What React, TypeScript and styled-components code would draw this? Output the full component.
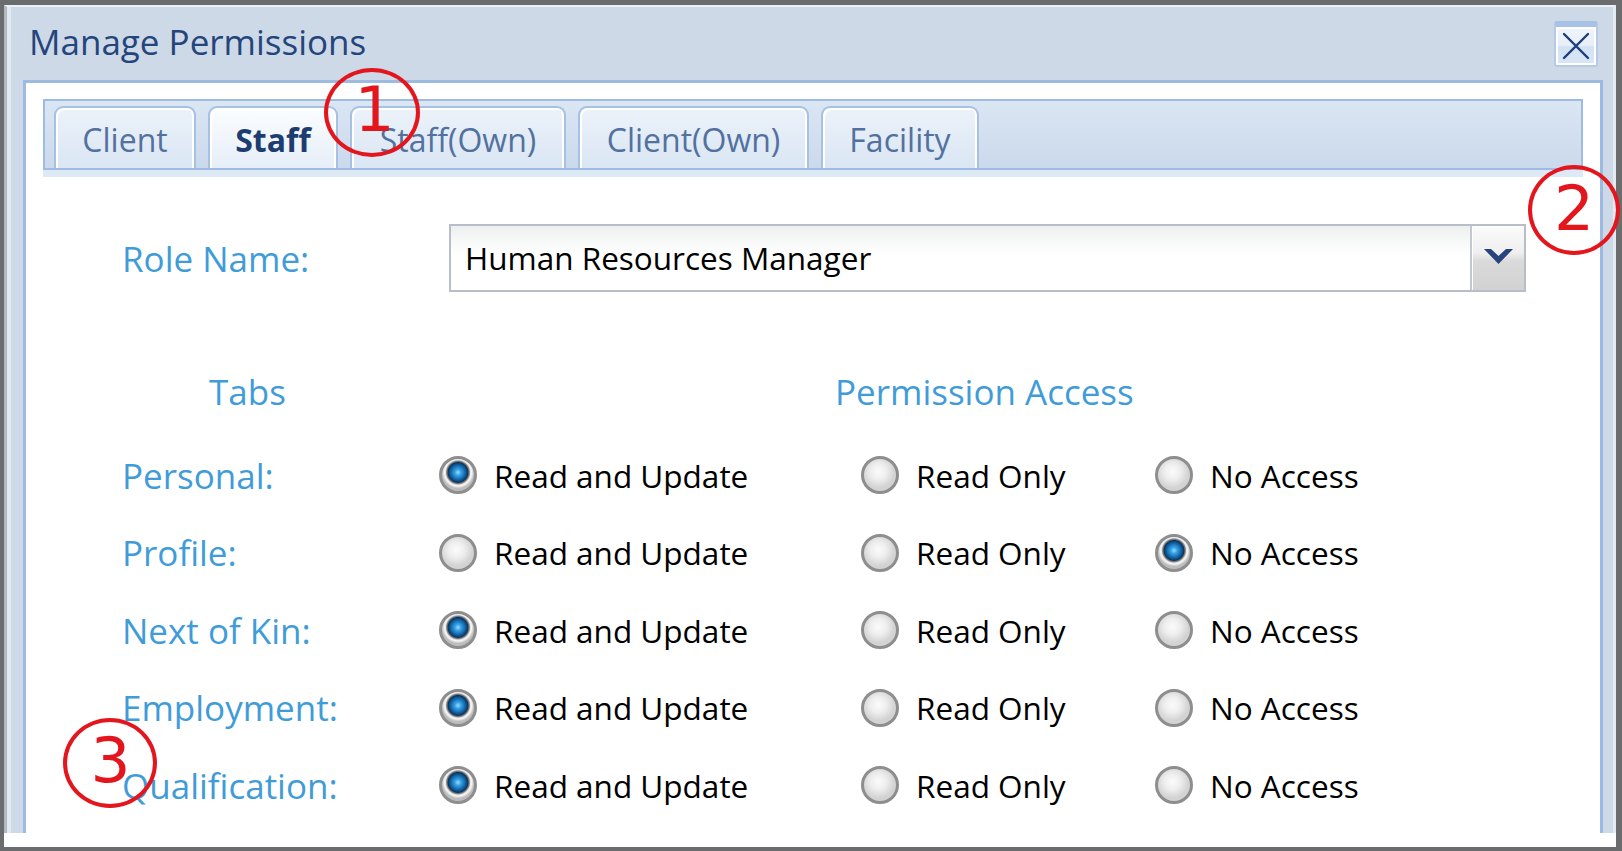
import React from "react";
import styled, { createGlobalStyle } from "styled-components";

const GlobalStyle = createGlobalStyle`
  html, body {
    margin: 0;
    padding: 0;
    background: #6b6c6e;
  }
  body {
    font-family: "Open Sans", "Noto Sans", sans-serif;
  }
`;

const Page = styled.div`
  position: relative;
  width: 1622px;
  height: 851px;
  overflow: hidden;
`;

const Frame = styled.div`
  width: 100%;
  height: 100%;
  box-sizing: border-box;
  border-style: solid;
  border-color: #6b6c6e;
  border-width: 5px 6px 4px 4px;
  background: #fff;
`;

const Dialog = styled.div`
  height: 828px;
  box-sizing: border-box;
  display: flex;
  flex-direction: column;
  background: #cdd9e6;
  border-top: 2px solid #edf1f6;
  border-left: 3px solid #b3b9c0;
  border-right: 3px solid #e4eaf2;
  box-shadow: inset 4px 0 0 #e3e9f1;
  padding: 0 10px 0 16px;
`;

const TitleBar = styled.div`
  height: 73px;
  flex-shrink: 0;
  display: flex;
  align-items: center;
  justify-content: space-between;
  padding-left: 6px;
  padding-right: 5px;
`;

const Title = styled.span`
  font-size: 35px;
  line-height: 1;
  color: #24457c;
  margin-top: -5px;
`;

const CloseButton = styled.div`
  width: 44px;
  height: 46px;
  margin-top: 1px;
  box-sizing: border-box;
  border: 2px solid #b6cae6;
  border-top: 6px solid #a6c2e6;
  border-radius: 3px;
  background: linear-gradient(#f0f5fb 0%, #e6eef8 48%, #d3e2f3 52%, #d9e6f5 100%);
  box-shadow: inset 0 0 0 2px #fff;
  display: flex;
  align-items: center;
  justify-content: center;
`;

const Panel = styled.div`
  flex: 1;
  display: flex;
  flex-direction: column;
  background: #fff;
  border: 3px solid #9dbbe1;
  border-bottom: none;
`;

const TabStrip = styled.div`
  margin: 16px 17px 7px;
  height: 71px;
  box-sizing: border-box;
  border: 2px solid #9ebce2;
  background: linear-gradient(#dbe6f3, #cad9ec);
  box-shadow: 0 7px 0 #dee9f6;
  display: flex;
  align-items: flex-end;
  gap: 12px;
  padding-left: 9px;
`;

const Tab = styled.div<{ $width: number; $active?: boolean }>`
  width: ${(p) => p.$width}px;
  height: 62px;
  box-sizing: border-box;
  border: 2px solid #a7c1e3;
  border-bottom: none;
  border-radius: 9px 9px 0 0;
  box-shadow: inset 2px 2px 0 #fff, inset -2px 0 0 #fff;
  background: ${(p) =>
    p.$active
      ? "linear-gradient(#fbfdff, #e6eef8)"
      : "linear-gradient(#ecf2f9, #dae6f4)"};
  display: flex;
  align-items: center;
  justify-content: center;
  padding-top: 4px;
  font-size: 32px;
  line-height: 1;
  font-weight: ${(p) => (p.$active ? 700 : 400)};
  color: ${(p) => (p.$active ? "#1d3d70" : "#52719f")};
`;

const Form = styled.div`
  padding-left: 96px;
  display: flex;
  flex-direction: column;
`;

const RoleRow = styled.div`
  margin-top: 47px;
  height: 68px;
  display: flex;
  align-items: center;
`;

const Label = styled.span<{ $width?: number }>`
  width: ${(p) => (p.$width ? `${p.$width}px` : "auto")};
  flex-shrink: 0;
  font-size: 35px;
  line-height: 1;
  color: #3f9cd9;
  white-space: nowrap;
`;

const Combo = styled.div`
  width: 1077px;
  height: 68px;
  box-sizing: border-box;
  border: 2px solid #b8bdca;
  display: flex;
`;

const ComboText = styled.div`
  flex: 1;
  display: flex;
  align-items: center;
  padding-left: 14px;
  font-size: 31.5px;
  line-height: 1;
  color: #000;
  background: linear-gradient(#eef0f0 0%, #ffffff 45%);
`;

const ComboButton = styled.div`
  width: 52px;
  border-left: 2px solid #c3c7cf;
  box-shadow: inset 1px 1px 0 #fff;
  background: linear-gradient(#fbfbfb 0%, #efefef 42%, #dadada 55%, #d2d2d2 100%);
  display: flex;
  align-items: center;
  justify-content: center;
  padding-bottom: 3px;
`;

const HeaderRow = styled.div`
  margin-top: 73px;
  height: 52px;
  display: flex;
  align-items: center;
  padding-left: 87px;
`;

const Rows = styled.div`
  margin-top: 19.5px;
  display: flex;
  flex-direction: column;
`;

const PermRow = styled.div`
  height: 77.5px;
  display: grid;
  grid-template-columns: 317px 422px 294px auto;
  align-items: center;
`;

const Option = styled.label`
  display: flex;
  align-items: center;
  gap: 17px;
  font-size: 31.5px;
  line-height: 1;
  color: #000;
  white-space: nowrap;
`;

const RadioDot = styled.span<{ $checked?: boolean }>`
  width: 38px;
  height: 38px;
  flex-shrink: 0;
  box-sizing: border-box;
  border-radius: 50%;
  border: 3px solid #8e8e8e;
  background: ${(p) =>
    p.$checked
      ? "radial-gradient(circle at 50% 42%, #9adcfb 0, #3ba3e4 3px, #1a78c0 6px, #0e4f86 8.5px, #0a3558 10px, #4e5a66 10.5px, #8f8f8f 11.5px, #e6e6e6 12.5px, #f7f7f7 13.5px, #d4d4d4 15px, #bdbdbd 16px)"
      : "radial-gradient(circle at 45% 40%, #fbfbfb 0, #eeeeee 8px, #d3d3d3 16px)"};
`;

const Mark = styled.div<{ $x: number; $y: number; $w: number; $h: number }>`
  position: absolute;
  left: ${(p) => p.$x}px;
  top: ${(p) => p.$y}px;
  width: ${(p) => p.$w}px;
  height: ${(p) => p.$h}px;
  box-sizing: border-box;
  border: 4px solid #e4161d;
  border-radius: 50%;
  display: flex;
  align-items: center;
  justify-content: center;
`;

const MarkDigit = styled.span<{ $dx?: number; $dy?: number }>`
  font-family: "DejaVu Sans", sans-serif;
  font-size: 63px;
  line-height: 1;
  color: #e4161d;
  margin-left: ${(p) => p.$dx ?? 0}px;
  margin-top: ${(p) => p.$dy ?? 0}px;
`;

const tabs = [
  { name: "Client", width: 142 },
  { name: "Staff", width: 130, active: true },
  { name: "Staff(Own)", width: 216 },
  { name: "Client(Own)", width: 231 },
  { name: "Facility", width: 158 },
];

const options = ["Read and Update", "Read Only", "No Access"];

const permissions = [
  { tab: "Personal:", value: 0 },
  { tab: "Profile:", value: 2 },
  { tab: "Next of Kin:", value: 0 },
  { tab: "Employment:", value: 0 },
  { tab: "Qualification:", value: 0 },
];

const App: React.FC = () => {
  return (
    <Page>
      <GlobalStyle />
      <Frame>
        <Dialog>
          <TitleBar>
            <Title>Manage Permissions</Title>
            <CloseButton>
              <svg width="28" height="28" viewBox="0 0 28 28">
                <path
                  d="M2 2 L26 26 M26 2 L2 26"
                  stroke="#1b3d7c"
                  strokeWidth="2.4"
                  strokeLinecap="round"
                />
              </svg>
            </CloseButton>
          </TitleBar>
          <Panel>
            <TabStrip>
              {tabs.map((t) => (
                <Tab key={t.name} $width={t.width} $active={t.active}>
                  {t.name}
                </Tab>
              ))}
            </TabStrip>
            <Form>
              <RoleRow>
                <Label $width={327}>Role Name:</Label>
                <Combo>
                  <ComboText>Human Resources Manager</ComboText>
                  <ComboButton>
                    <svg width="29" height="16" viewBox="0 0 29 16">
                      <path d="M0 0 H7 L14.5 7 L22 0 H29 L14.5 15 Z" fill="#27457c" />
                    </svg>
                  </ComboButton>
                </Combo>
              </RoleRow>
              <HeaderRow>
                <Label $width={626}>Tabs</Label>
                <Label>Permission Access</Label>
              </HeaderRow>
              <Rows>
                {permissions.map((row) => (
                  <PermRow key={row.tab}>
                    <Label>{row.tab}</Label>
                    {options.map((opt, i) => (
                      <Option key={opt}>
                        <RadioDot $checked={row.value === i} />
                        {opt}
                      </Option>
                    ))}
                  </PermRow>
                ))}
              </Rows>
            </Form>
          </Panel>
        </Dialog>
      </Frame>
      <Mark $x={324} $y={68} $w={96} $h={89}>
        <MarkDigit $dx={5} $dy={-6}>1</MarkDigit>
      </Mark>
      <Mark $x={1528} $y={165} $w={92} $h={90}>
        <MarkDigit $dy={-3}>2</MarkDigit>
      </Mark>
      <Mark $x={63} $y={718} $w={94} $h={90}>
        <MarkDigit $dx={1} $dy={-5}>3</MarkDigit>
      </Mark>
    </Page>
  );
};

export default App;
